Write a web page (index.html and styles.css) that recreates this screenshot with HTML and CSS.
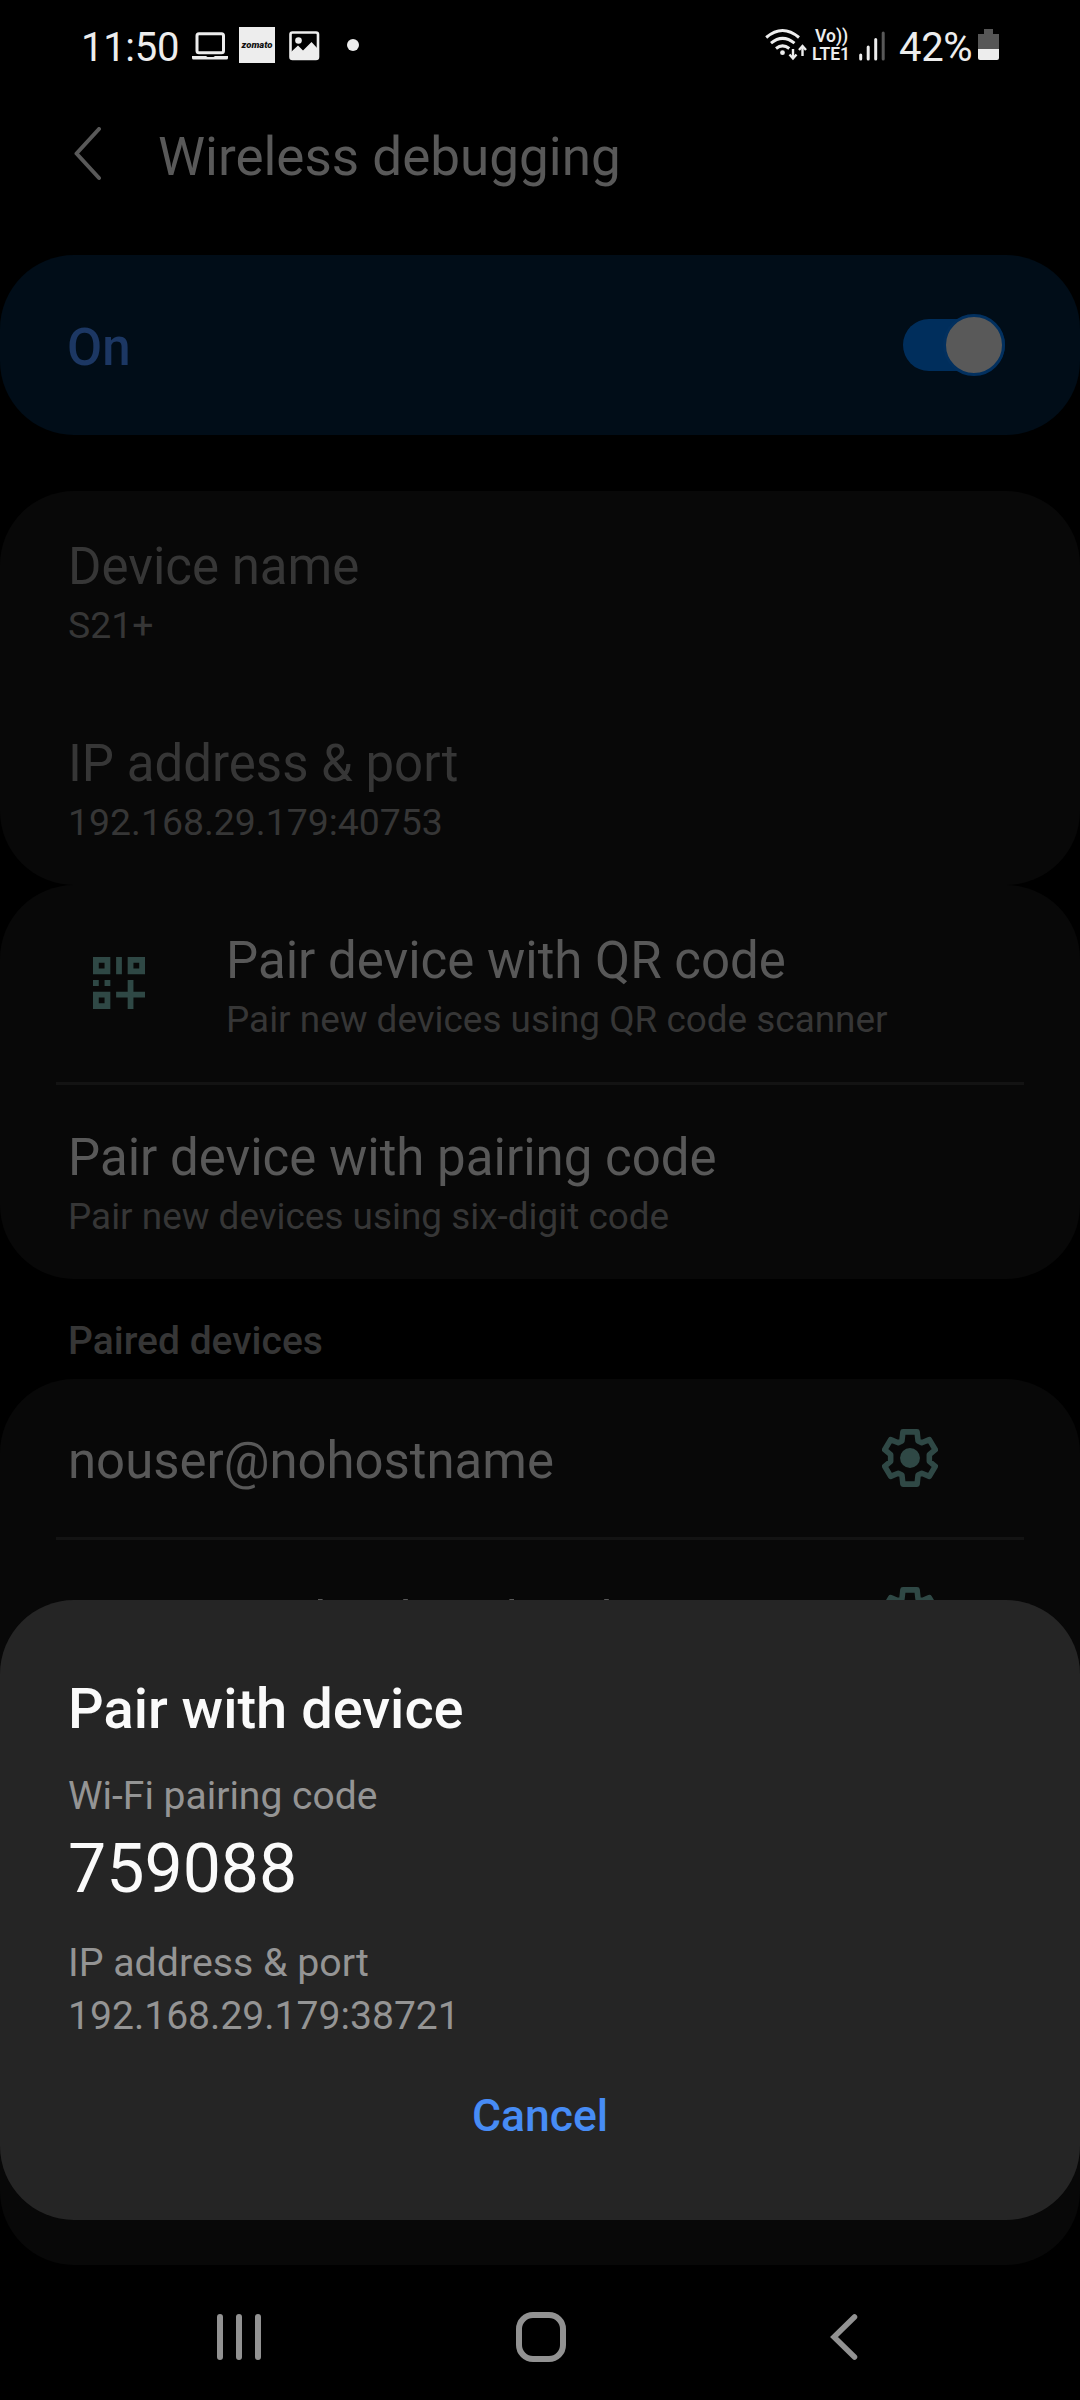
FILE: index.html
```html
<!DOCTYPE html>
<html lang="en">
<head>
<meta charset="utf-8">
<title>Wireless debugging</title>
<link rel="stylesheet" href="styles.css">
</head>
<body>
<svg class="defs" width="0" height="0" aria-hidden="true">
  <symbol id="gear" viewBox="0 0 56.200 58">
    <path d="M21 2.800h14.200l1 9.200 3.700 1.700 7.600-3.200 6 10.200-6 5v6.600l6 5-6 10.200-7.600-3.200-3.700 1.700-1 9.200H21l-1-9.200-3.700-1.700-7.600 3.200-6-10.200 6-5v-6.600l-6-5 6-10.200 7.600 3.200 3.700-1.700z" fill="none" stroke="currentColor" stroke-width="5.600" stroke-linejoin="round"/>
    <circle cx="28.100" cy="29" r="10" fill="currentColor"/>
  </symbol>
</svg>
<div class="screen">
  <div class="status">
    <span class="clock">11:50</span>
    <svg class="laptop" width="36" height="28" viewBox="0 0 36 28">
      <rect x="5" y="1.700" width="26.500" height="19" rx="2" fill="none" stroke="currentColor" stroke-width="3"/>
      <path d="M0 24h14l1.500 1h6l1.500-1h13v2q0 1.500-1.500 1.500h-33q-1.500 0-1.500-1.500z" fill="currentColor"/>
    </svg>
    <span class="zomato">zomato</span>
    <svg class="photo" width="31" height="30" viewBox="0 0 31 30">
      <rect x="1.500" y="1.500" width="27.500" height="26.500" rx="2" fill="none" stroke="currentColor" stroke-width="2.600"/>
      <circle cx="9.500" cy="9.500" r="3.300" fill="currentColor"/>
      <path d="M2 21l7-6.500 5 5 8.500-8.500 6.500 7v10h-27z" fill="currentColor"/>
    </svg>
    <span class="dot"></span>
    <span class="grow"></span>
    <svg class="wifi" width="42" height="34" viewBox="0 0 42 34">
      <g fill="none" stroke="currentColor" stroke-width="3">
        <path d="M1.200 9.500Q17.500-4.500 34 9.500"/>
        <path d="M6 15.200Q17.500 5.500 29.500 15.200"/>
        <path d="M11 20.500Q17.500 15.200 24.300 20.500"/>
        <path d="M28 21v9M37.500 18.500v9.500" stroke-width="2.400"/>
        <path d="M24.500 26.500l3.500 4 3.500-4M34 22l3.500-4 3.500 4" stroke-width="2.400"/>
      </g>
      <circle cx="17.500" cy="24.700" r="2.400" fill="currentColor"/>
    </svg>
    <div class="volte"><span class="vo">Vo))</span><span>LTE1</span></div>
    <svg class="signal" width="27" height="30" viewBox="0 0 27 30">
      <path d="M1.700 24v4M9.200 16v12M16.700 8.500v19.500" stroke="currentColor" stroke-width="3" stroke-linecap="round"/>
      <path d="M24.200 2v26" stroke="#585858" stroke-width="3" stroke-linecap="round"/>
    </svg>
    <span class="percent">42%</span>
    <svg class="battery" width="21" height="32" viewBox="0 0 21 32">
      <path d="M6 0h9v5h6v15H0V5h6z" fill="#565656"/>
      <path d="M0 20h21v9q0 2-2 2H2q-2 0-2-2z" fill="currentColor"/>
    </svg>
  </div>

  <header class="bar">
    <svg width="28" height="54" viewBox="0 0 28 54"><path d="M25 2L2.500 26.500 25 51" fill="none" stroke="currentColor" stroke-width="4" stroke-linecap="round" stroke-linejoin="round"/></svg>
    <h1>Wireless debugging</h1>
  </header>

  <section class="card master">
    <span class="on">On</span>
    <span class="switch"><span class="thumb"></span></span>
  </section>

  <section class="card info">
    <div class="row off"><div class="title">Device name</div><div class="sub">S21+</div></div>
    <div class="row off"><div class="title">IP address &amp; port</div><div class="sub">192.168.29.179:40753</div></div>
  </section>

  <section class="card">
    <div class="row with-icon">
      <svg class="qr" width="52" height="52" viewBox="0 0 9 9" fill="currentColor">
        <path fill-rule="evenodd" d="M0 0h3v3H0zM1 1v1h1V1zM4 0h1v3H4zM6 0h3v3H6zM7 1v1h1V1zM0 4h1v1H0zM2 4h1v1H2zM0 6h3v3H0zM1 7v1h1V7zM6 4h1v2h2v1H7v2H6V7H4V6h2z"/>
      </svg>
      <div><div class="title">Pair device with QR code</div><div class="sub">Pair new devices using QR code scanner</div></div>
    </div>
    <div class="row divided"><div class="title">Pair device with pairing code</div><div class="sub">Pair new devices using six-digit code</div></div>
  </section>

  <h2>Paired devices</h2>

  <section class="card paired">
    <div class="device"><span class="title">nouser@nohostname</span><svg class="gear" width="56" height="58"><use href="#gear"/></svg></div>
    <div class="device divided"><span class="title">moiras@mhoubwiclawd</span><svg class="gear" width="56" height="58"><use href="#gear"/></svg></div>
  </section>

  <nav>
    <svg width="44" height="46" viewBox="0 0 44 46"><path d="M3 3v40M22 3v40M41 3v40" stroke="currentColor" stroke-width="6" stroke-linecap="round"/></svg>
    <svg width="50" height="50" viewBox="0 0 50 50"><rect x="3" y="3" width="44" height="44" rx="14" fill="none" stroke="currentColor" stroke-width="6"/></svg>
    <svg width="28" height="46" viewBox="0 0 28 46"><path d="M24.500 3L4 23l20.500 20" fill="none" stroke="currentColor" stroke-width="5.500" stroke-linecap="round"/></svg>
  </nav>

  <div class="dialog" role="dialog">
    <h3>Pair with device</h3>
    <div class="label">Wi-Fi pairing code</div>
    <div class="code">759088</div>
    <div class="label address">IP address &amp; port</div>
    <div class="label port">192.168.29.179:38721</div>
    <button>Cancel</button>
  </div>
</div>
</body>
</html>
```
FILE: styles.css
```css
* { box-sizing: border-box; margin: 0; padding: 0; }
body { background: #000; font-family: Roboto, sans-serif; }
svg { display: block; flex: none; }
.defs { position: absolute; }
.screen {
  position: relative;
  display: flex;
  flex-direction: column;
  width: 1080px;
  height: 2400px;
  overflow: hidden;
  background: #000;
  white-space: nowrap;
}

/* status bar */
.status {
  display: flex;
  align-items: flex-start;
  height: 90px;
  padding: 0 81px 0 81px;
  color: #ededed;
}
.clock, .percent { font-size: 40px; line-height: 46px; margin-top: 25px; }
.clock { width: 111px; letter-spacing: -.3px; }
.laptop { margin-top: 32px; }
.zomato {
  width: 36px;
  height: 36px;
  margin: 27px 0 0 11px;
  background: #ededed;
  color: #111;
  font: italic 900 9.500px/36px Roboto, sans-serif;
  text-align: center;
}
.photo { margin: 31px 0 0 14px; }
.dot { width: 12px; height: 12px; margin: 39px 0 0 27px; border-radius: 50%; background: #ededed; }
.grow { flex: 1; }
.wifi { margin: 28px 5px 0 0; }
.volte {
  display: flex;
  flex-direction: column;
  width: 47px;
  margin-top: 28px;
  font-weight: 600;
  font-size: 17.500px;
  line-height: 17px;
}
.vo { padding-left: 3px; margin-bottom: 1px; }
.signal { margin: 31px 13px 0 0; }
.percent { width: 79px; letter-spacing: -.3px; }
.battery { margin-top: 29px; }

/* header */
.bar { display: flex; height: 165px; padding: 35px 0 0 74px; color: #595959; }
.bar svg { margin-top: 2px; }
h1 { margin-left: 56px; font-weight: 400; font-size: 53px; line-height: 64px; }

/* cards */
.card { flex: none; border-radius: 74px; background: #080808; color: #585858; }
.master {
  display: flex;
  align-items: center;
  justify-content: space-between;
  height: 180px;
  padding: 0 75px 0 67px;
  background: #010d18;
}
.on { padding-top: 5px; color: #1c3763; font-weight: 500; font-size: 51px; line-height: 60px; }
.switch { display: flex; align-items: center; justify-content: flex-end; width: 102px; height: 52px; border-radius: 26px; background: #002e5c; }
.thumb { flex: none; width: 62px; height: 62px; border: 3px solid #02305f; border-radius: 50%; background: #595959; }
.info { margin-top: 56px; }
.row { height: 197px; padding: 46px 68px 0; }
.title { font-size: 51px; line-height: 60px; }
.sub { margin-top: 7px; color: #363636; font-size: 36.900px; line-height: 44px; }
.info .sub { margin-top: 6px; font-size: 37.400px; }
.off { color: #363636; }
.divided { background: linear-gradient(#131313, #131313) 56px 0 / 968px 3px no-repeat; }
.with-icon { display: flex; padding-left: 93px; }
.qr { margin: 26px 81px 0 0; color: #2f4845; }
h2 { height: 100px; padding: 40px 68px 0; color: #363636; font-weight: 500; font-size: 39px; line-height: 44px; }
.paired { height: 886px; }
.device { display: flex; align-items: center; justify-content: space-between; height: 158px; padding: 0 142px 0 68px; }
.device .title { padding-top: 6px; font-size: 50.900px; }
.device.divided .title { padding-top: 9px; }
.gear { color: #2f4845; }

/* navigation */
nav { display: flex; align-items: center; gap: 255px; height: 135px; padding: 9px 0 0 217px; color: #929292; }
nav svg:last-child { margin-left: 9px; }

/* dialog laid over the page */
.dialog {
  position: absolute;
  left: 0;
  top: 1600px;
  display: flex;
  flex-direction: column;
  width: 1080px;
  height: 620px;
  padding: 76px 68px 0;
  border-radius: 74px;
  background: #252525;
  color: #fafafa;
}
h3 { font-weight: 500; font-size: 56px; line-height: 66px; }
.label { margin-top: 31px; color: #949494; font-size: 39px; line-height: 46px; }
.code { margin-top: 10px; font-size: 68px; line-height: 80px; }
.address { margin-top: 31px; font-size: 39.300px; }
.port { margin-top: 7px; font-size: 39.100px; }
button { align-self: center; margin-top: 51px; border: 0; background: none; color: #478cf5; font: 500 44.500px/52px Roboto, sans-serif; }
```
